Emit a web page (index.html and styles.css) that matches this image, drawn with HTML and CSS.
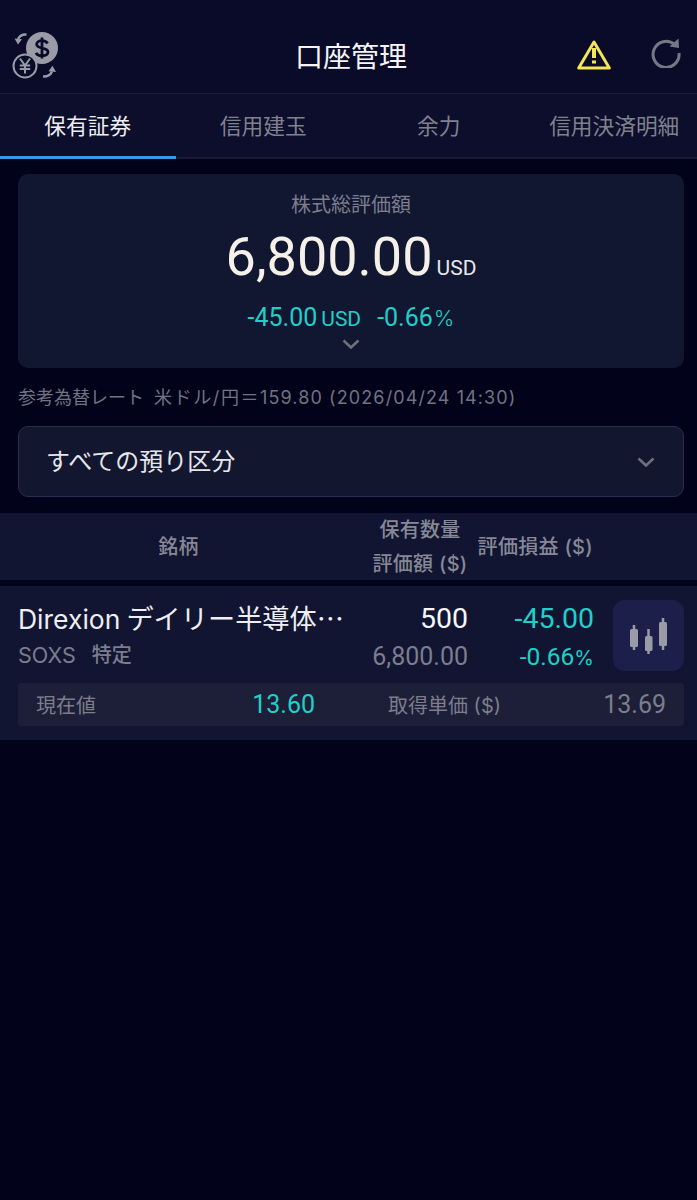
FILE: index.html
```html
<!DOCTYPE html>
<html lang="ja">
<head>
<meta charset="utf-8">
<title>口座管理</title>
<link rel="stylesheet" href="styles.css">
</head>
<body>
<header class="topbar">
  <svg class="ico-fx" viewBox="0 0 48 48" width="48" height="48">
    <path class="fx-line" d="M14.500 2.500c-4-.3-7 1.500-8.500 4.500" />
    <path class="fx-fill" d="M2.500 6.500l7.500.8-4 5.200z"/>
    <circle class="fx-fill" cx="30" cy="16" r="16"/>
    <path class="fx-dark" d="M35.500 11.500c-1-2-3-2.800-5.500-2.800-3 0-5.300 1.400-5.300 3.600 0 5.200 11.300 2.600 11.300 7.800 0 2.300-2.600 3.700-6 3.700-2.800 0-5-1-6-3M30 5.500v21"/>
    <circle class="fx-ring" cx="13" cy="34" r="11.500"/>
    <path class="fx-yen" d="M8 26.500l5 7 5-7M7.800 33.500h10.400M7.800 37h10.400M13 33.500v8"/>
    <path class="fx-line" d="M31 44.500c4 .2 7.500-1.500 9-5"/>
    <path class="fx-fill" d="M44 40l-7.500-.8 4-5.400z"/>
  </svg>
  <h1 class="title">口座管理</h1>
  <div class="top-actions">
    <svg class="ico-warn" viewBox="0 0 34 30" width="34" height="30">
      <path class="warn-tri" d="M17 2 L32.300 28 H1.700 Z"/>
      <path class="warn-mark" d="M17 8v10M17 20.500v3"/>
    </svg>
    <svg class="ico-reload" viewBox="0 0 30 30" width="30" height="30">
      <path class="reload-arc" d="M23.500 6.500A13 13 0 1 0 28 15"/>
      <path class="reload-head" d="M18.500 8.500 27.500 .5 28 10z"/>
    </svg>
  </div>
</header>

<nav class="tabs">
  <div class="tab tab-active">保有証券</div>
  <div class="tab">信用建玉</div>
  <div class="tab">余力</div>
  <div class="tab">信用決済明細</div>
</nav>

<main class="content">
  <section class="summary">
    <div class="summary-label">株式総評価額</div>
    <div class="summary-total"><span class="total-num">6,800.00</span><span class="total-unit">USD</span></div>
    <div class="summary-change">
      <span class="chg-num">-45.00</span><span class="chg-unit">USD</span>
      <span class="chg-num chg-pct">-0.66</span><span class="chg-sign">%</span>
    </div>
    <svg class="summary-chevron" viewBox="0 0 18 10" width="18" height="10"><path d="M1.500 1.500 9 8.500 16.500 1.500"/></svg>
  </section>

  <p class="rate">参考為替レート<span class="rate-pair">米ドル/円＝</span><span class="rate-value">159.80 (2026/04/24 14:30)</span></p>

  <div class="select">
    <span class="select-text">すべての預り区分</span>
    <svg class="select-chevron" viewBox="0 0 18 10" width="18" height="10"><path d="M1.500 1.500 9 8.500 16.500 1.500"/></svg>
  </div>
</main>

<div class="thead">
  <div class="th-name">銘柄</div>
  <div class="th-qty"><div>保有数量</div><div>評価額 ($)</div></div>
  <div class="th-pl">評価損益 ($)</div>
</div>

<article class="holding">
  <div class="holding-top">
    <div class="h-name">
      <div class="h-title">Direxion<span class="h-title-jp">デイリー半導体…</span></div>
      <div class="h-sub"><span class="h-code">SOXS</span><span class="h-kind">特定</span></div>
    </div>
    <div class="h-qty"><div class="h-qty-1">500</div><div class="h-qty-2">6,800.00</div></div>
    <div class="h-pl"><div class="h-pl-1">-45.00</div><div class="h-pl-2">-0.66<span class="h-pct">%</span></div></div>
    <div class="h-btn">
      <svg viewBox="0 0 38 36" width="38" height="36">
        <path class="candle-wick" d="M4 7v25M18.500 11v25M33 0v32"/>
        <rect class="candle-body" x="0" y="11" width="8" height="18" rx="1.500"/>
        <rect class="candle-body" x="15" y="18" width="7.500" height="15" rx="1.500"/>
        <rect class="candle-body" x="29" y="4" width="8" height="24" rx="1.500"/>
      </svg>
    </div>
  </div>
  <div class="h-prices">
    <span class="p-label">現在値</span>
    <span class="p-cur">13.60</span>
    <span class="p-label p-label-2">取得単価 ($)</span>
    <span class="p-cost">13.69</span>
  </div>
</article>
</body>
</html>
```
FILE: styles.css
```css
* { box-sizing: border-box; }
html, body { margin: 0; padding: 0; }
body {
  background: #02021a;
  color: #fff;
  font-family: Roboto, "Noto Sans CJK JP", sans-serif;
  height: 1200px;
  overflow: hidden;
}
.topbar {
  height: 94px;
  background: #0a0b28;
  border-bottom: 1px solid #1a1c38;
  display: grid;
  grid-template-columns: 1fr auto 1fr;
  align-items: start;
  padding: 32px 7px 0 12px;
}
.ico-fx { display: block; }
.fx-fill { fill: #9b9ba7; }
.fx-line { fill: none; stroke: #9b9ba7; stroke-width: 2.400; }
.fx-dark { fill: none; stroke: #0a0b28; stroke-width: 2.800; }
.fx-ring { fill: #0a0b28; stroke: #9b9ba7; stroke-width: 2; }
.fx-yen { fill: none; stroke: #9b9ba7; stroke-width: 2; }
.title {
  margin: 6px 0 0;
  font-size: 28px;
  line-height: 40px;
  font-weight: 400;
  color: #f4f4f6;
}
.top-actions {
  display: flex;
  justify-content: flex-end;
  align-items: flex-start;
  gap: 40px;
  margin-right: 9px;
}
.ico-warn { margin-top: 8px; }
.ico-reload { margin-top: 6px; }
.warn-tri { fill: none; stroke: #f4e557; stroke-width: 3; stroke-linejoin: round; }
.warn-mark { fill: none; stroke: #f4e557; stroke-width: 4; }
.reload-arc { fill: none; stroke: #777887; stroke-width: 3; }
.reload-head { fill: #777887; }
.tabs {
  height: 65px;
  background: #0c0e2b;
  display: grid;
  grid-template-columns: repeat(4, 175.500px);
  box-shadow: inset 0 -2px 0 #181a36;
  overflow: hidden;
}
.tab {
  height: 65px;
  padding-top: 14px;
  line-height: 38px;
  text-align: center;
  font-size: 21.700px;
  color: #80818f;
  white-space: nowrap;
}
.tab-active {
  color: #eeeef2;
  border-bottom: 3px solid #2f9fe0;
}
.content { padding: 15px 13px 0 18px; }
.summary {
  height: 194px;
  background: #111631;
  border-radius: 10px;
  display: flex;
  flex-direction: column;
  align-items: center;
  padding-top: 17px;
}
.summary-label {
  font-size: 20px;
  line-height: 29px;
  color: #7c7d8d;
}
.summary-total {
  display: flex;
  align-items: baseline;
  margin-top: 5px;
  height: 64px;
}
.total-num {
  font-size: 54px;
  line-height: 64px;
  color: #f6f1e8;
}
.total-unit {
  font-size: 21px;
  color: #e8e8ec;
  margin-left: 4px;
}
.summary-change {
  display: flex;
  align-items: baseline;
  margin-top: 14px;
  height: 30px;
  color: #20cfc9;
}
.chg-num { font-size: 25px; line-height: 30px; }
.chg-unit { font-size: 21px; margin-left: 4px; }
.chg-sign { font-size: 22px; margin-left: 1px; font-family: Inter, sans-serif; font-weight: 300; }
.chg-pct { margin-left: 16px; }
.summary-chevron { margin-top: 6px; }
.summary-chevron path,
.select-chevron path { fill: none; stroke: #6e6f7f; stroke-width: 2.600; }
.rate {
  margin: 18px 0 0;
  font-family: Inter, "Noto Sans CJK JP", sans-serif;
  font-size: 18px;
  line-height: 24px;
  color: #727382;
  white-space: nowrap;
}
.rate-pair { margin-left: 10px; letter-spacing: 1.600px; }
.rate-value { letter-spacing: 1.100px; }
.select {
  margin-top: 16px;
  height: 71px;
  background: #13162f;
  border: 1px solid #2a2d50;
  border-radius: 10px;
  display: flex;
  justify-content: space-between;
  align-items: center;
  padding: 0 28px 0 27px;
  color: #e6e6ea;
}
.select-text { font-size: 24px; line-height: 34px; }
.thead {
  margin-top: 16px;
  height: 67px;
  background: #111531;
  display: grid;
  grid-template-columns: 357px 126px 110px;
  align-items: center;
  font-family: Inter, "Noto Sans CJK JP", sans-serif;
  font-size: 20px;
  font-weight: 500;
  letter-spacing: .3px;
  color: #878896;
  white-space: nowrap;
}
.th-name { text-align: center; padding-bottom: 3px; }
.th-qty { text-align: center; line-height: 34px; }
.th-pl { text-align: right; padding-bottom: 3px; margin-left: -8px; }
.holding {
  margin-top: 6px;
  height: 154px;
  background: #111531;
  padding: 14px 13px 0 18px;
}
.holding-top {
  display: grid;
  grid-template-columns: 330px 120px 126px 71px;
  height: 71px;
}
.h-title {
  font-family: Inter, "Noto Sans CJK JP", sans-serif;
  font-size: 26.500px;
  line-height: 34px;
  height: 38px;
  color: #eeeef4;
  white-space: nowrap;
}
.h-title-jp {
  font-family: "Noto Sans CJK JP", sans-serif;
  font-size: 27.200px;
  margin-left: 6px;
}
.h-sub {
  display: flex;
  gap: 16px;
  font-size: 20px;
  line-height: 34px;
  color: #7c7d8d;
}
.h-code { font-family: Inter, sans-serif; font-size: 21.500px; }
.h-kind { font-weight: 500; }
.h-qty, .h-pl { text-align: right; }
.h-qty-1 { font-size: 28.500px; line-height: 38px; color: #f6f6f8; }
.h-qty-2 { font-size: 25px; line-height: 38px; color: #7c7d8d; }
.h-pl-1 { font-size: 28.500px; line-height: 38px; color: #20cfc9; }
.h-pl-2 { font-size: 24.500px; line-height: 38px; color: #20cfc9; }
.h-pct { font-family: Inter, sans-serif; font-size: 20px; }
.h-btn {
  margin-left: 19px;
  width: 71px;
  height: 71px;
  background: #1d1f4b;
  border-radius: 12px;
  display: flex;
  align-items: center;
  justify-content: center;
}
.candle-wick { stroke: #9b9ba7; stroke-width: 2.500; fill: none; }
.candle-body { fill: #9b9ba7; }
.h-prices {
  margin-top: 12px;
  height: 43px;
  background: #1d1f38;
  border-radius: 3px;
  display: grid;
  grid-template-columns: 197px 82px 1fr auto;
  align-items: center;
  padding: 0 18px;
}
.p-label { font-family: Inter, "Noto Sans CJK JP", sans-serif; font-size: 20px; color: #7c7d8d; }
.p-label-2 { padding-left: 73px; }
.p-cur { font-size: 25px; color: #20cfc9; text-align: right; }
.p-cost { font-size: 25px; color: #7c7d8d; }
```
